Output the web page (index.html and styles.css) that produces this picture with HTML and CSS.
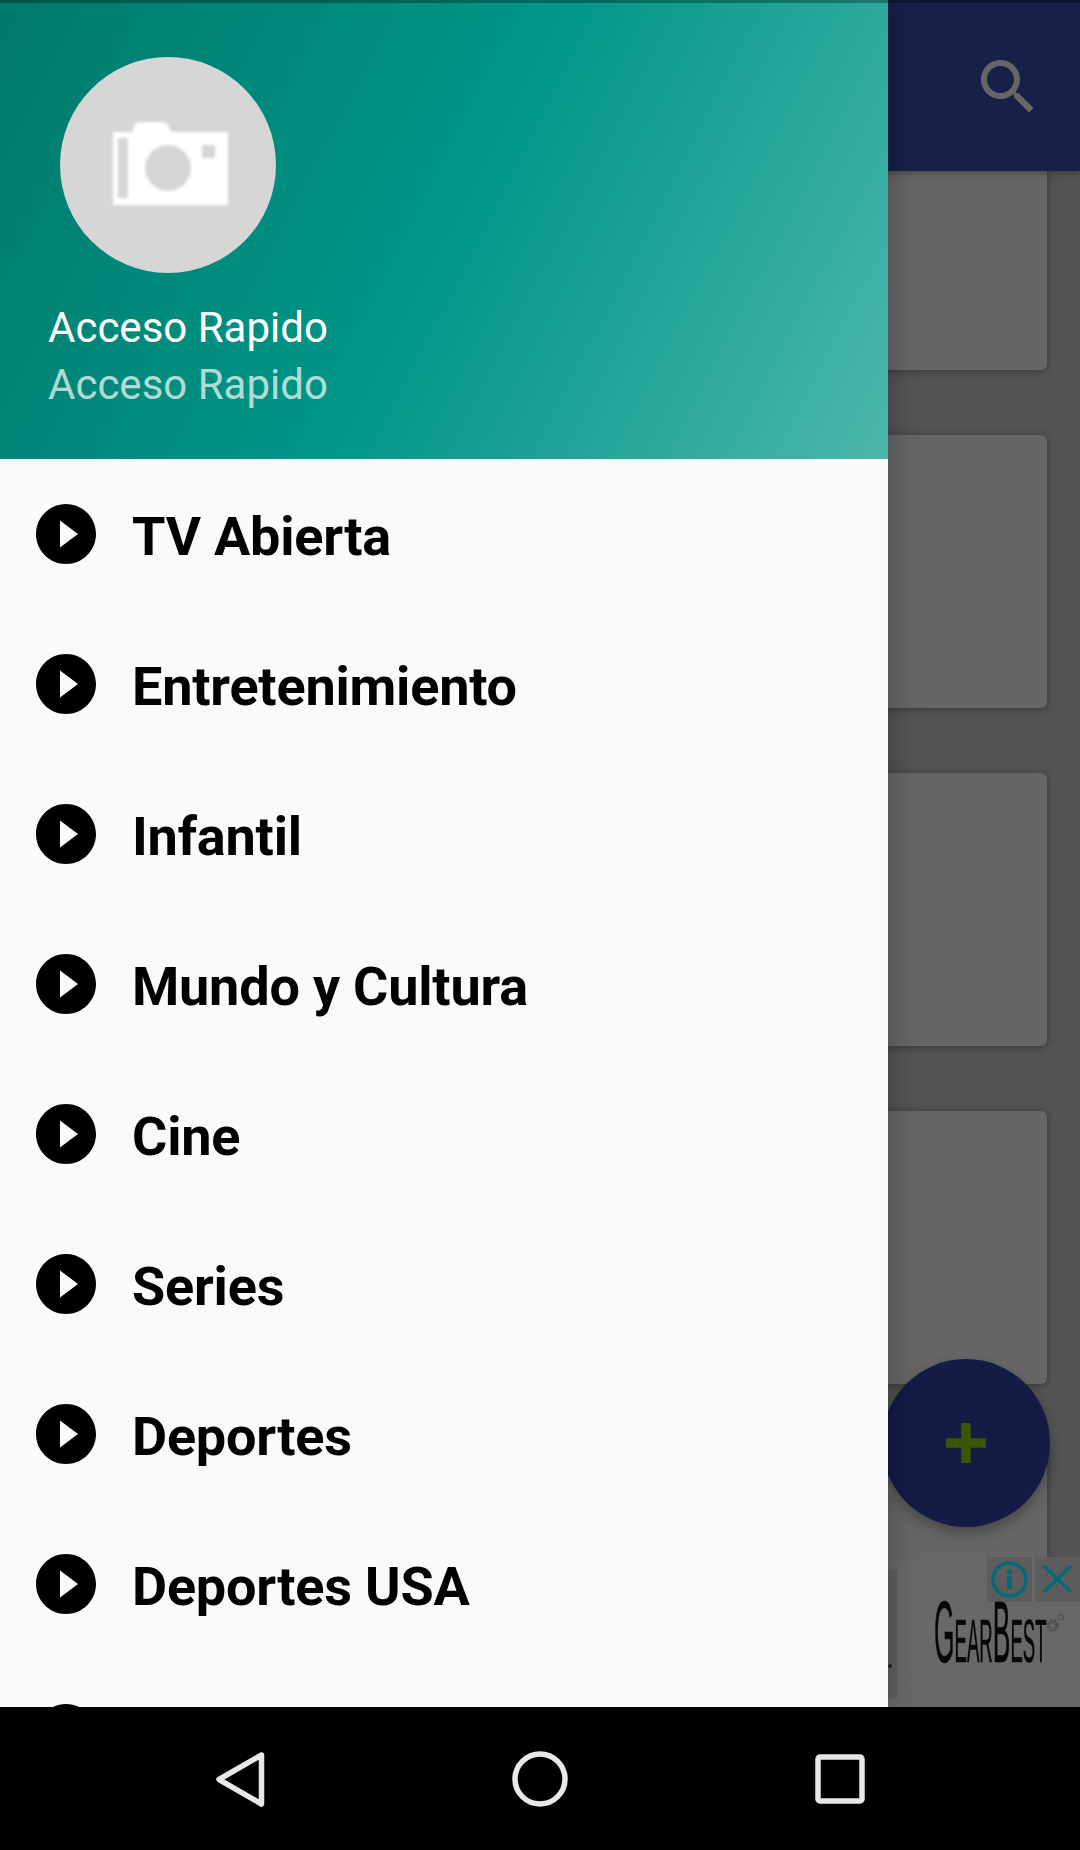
FILE: index.html
```html
<!DOCTYPE html>
<html lang="es">
<head>
<meta charset="utf-8">
<title>Acceso Rapido</title>
<link rel="stylesheet" href="styles.css">
</head>
<body>
<svg class="defs" width="0" height="0"><defs>
<symbol id="play" viewBox="0 0 24 24"><path d="M12 2C6.48 2 2 6.48 2 12s4.48 10 10 10 10-4.48 10-10S17.52 2 12 2zm-2 14.5v-9l6 4.5-6 4.5z"/></symbol>
<filter id="soft"><feGaussianBlur stdDeviation="1.700"/></filter>
</defs></svg>
<div class="phone">
  <div class="stage">
    <div class="app">
      <header class="appbar">
        <svg class="search" viewBox="0 0 24 24"><path d="M15.5 14h-.79l-.28-.27C15.41 12.59 16 11.11 16 9.5 16 5.91 13.09 3 9.5 3S3 5.91 3 9.5 5.91 16 9.5 16c1.61 0 3.09-.59 4.23-1.57l.27.28v.79l5 4.99L20.49 19l-4.99-5zm-6 0C7.01 14 5 11.99 5 9.5S7.01 5 9.5 5 14 7.01 14 9.5 11.99 14 9.5 14z"/></svg>
      </header>
      <div class="cards">
        <div class="card"></div>
        <div class="card"></div>
        <div class="card"></div>
        <div class="card"></div>
        <div class="card"></div>
      </div>
      <div class="ad">
        <div class="ad-side"></div>
        <span class="ad-dot"></span>
        <div class="ad-controls">
          <span class="ad-btn"><svg viewBox="0 0 45 45"><circle cx="22.500" cy="22.500" r="16.500" class="ad-line"/><circle cx="22.500" cy="14.500" r="2.600" class="ad-fill"/><rect x="20" y="19" width="5" height="13" class="ad-fill"/></svg></span>
          <span class="ad-btn"><svg viewBox="0 0 45 45"><path d="M9 9l27 26M36 9L9 35" class="ad-line"/></svg></span>
        </div>
        <span class="brand">GearBest</span>
        <svg class="gears" viewBox="0 0 20 20"><circle cx="7" cy="13" r="4.500" class="gear-big"/><circle cx="15.500" cy="4.500" r="2.800" class="gear-small"/></svg>
      </div>
      <button class="fab"><svg viewBox="0 0 40 40"><path d="M20 0v40M0 20h40"/></svg></button>
    </div>
    <aside class="drawer">
      <div class="drawer-head">
        <div class="avatar">
          <svg viewBox="0 0 216 216"><g filter="url(#soft)">
            <path fill-rule="evenodd" fill="#fff" d="M53 75h19l3-8q2-2 6-2h20q4 0 6 2l5 8h56v73H53zM58 81v60h10V81zM142 88v13h13V88z"/>
            <circle cx="108" cy="111" r="23" fill="#d6d6d6"/>
          </g></svg>
        </div>
        <div class="head-title">Acceso Rapido</div>
        <div class="head-sub">Acceso Rapido</div>
      </div>
      <ul class="menu">
        <li class="item"><svg class="play"><use href="#play"/></svg><span class="label">TV Abierta</span></li>
        <li class="item"><svg class="play"><use href="#play"/></svg><span class="label">Entretenimiento</span></li>
        <li class="item"><svg class="play"><use href="#play"/></svg><span class="label">Infantil</span></li>
        <li class="item"><svg class="play"><use href="#play"/></svg><span class="label">Mundo y Cultura</span></li>
        <li class="item"><svg class="play"><use href="#play"/></svg><span class="label">Cine</span></li>
        <li class="item"><svg class="play"><use href="#play"/></svg><span class="label">Series</span></li>
        <li class="item"><svg class="play"><use href="#play"/></svg><span class="label">Deportes</span></li>
        <li class="item"><svg class="play"><use href="#play"/></svg><span class="label">Deportes USA</span></li>
        <li class="item"><svg class="play"><use href="#play"/></svg></li>
      </ul>
    </aside>
    <div class="status"></div>
  </div>
  <nav class="navbar">
    <svg class="nav-icon" viewBox="0 0 72 72"><path d="M57.500 12L15 36.500 57.500 61z"/></svg>
    <svg class="nav-icon" viewBox="0 0 72 72"><circle cx="36" cy="36" r="25"/></svg>
    <svg class="nav-icon" viewBox="0 0 72 72"><rect x="14" y="14" width="44" height="44" rx="2"/></svg>
  </nav>
</div>
</body>
</html>
```
FILE: styles.css
```css
* { box-sizing: border-box; }
html, body { margin: 0; padding: 0; }
body { width: 1080px; height: 1850px; overflow: hidden; font-family: Roboto, "Liberation Sans", sans-serif; background: #000; }
.defs { position: absolute; }
.phone { width: 1080px; height: 1850px; display: flex; flex-direction: column; }
.stage { position: relative; height: 1707px; overflow: hidden; background: #545454; }
.app { height: 100%; display: flex; flex-direction: column; }

.appbar { position: relative; z-index: 2; flex: none; height: 171px; padding-right: 36px; display: flex; justify-content: flex-end; align-items: center; background: #182048; box-shadow: 0 2px 8px rgba(0,0,0,.3); }
.search { width: 72px; height: 72px; margin-top: 3px; fill: #666; }

.cards { margin: -74px 33px 0 20px; display: flex; flex-direction: column; gap: 65px; }
.card { flex: none; height: 273px; border-radius: 6px; background: #666; box-shadow: 0 1px 8px rgba(0,0,0,.36); }

.ad { position: absolute; left: 0; right: 0; bottom: 0; height: 150px; background: #686868; }
.ad-side { position: absolute; left: 888px; top: 13px; width: 9px; height: 128px; background: #606060; }
.ad-dot { position: absolute; left: 888px; top: 107px; width: 4px; height: 4px; border-radius: 50%; background: #222; }
.ad-controls { position: absolute; top: 0; right: 0; display: flex; gap: 3px; }
.ad-btn { width: 45px; height: 45px; background: #5c5c5c; }
.ad-btn svg { display: block; width: 45px; height: 45px; }
.ad-line { fill: none; stroke: #046a7a; stroke-width: 3.500; }
.ad-fill { fill: #046a7a; }
.brand { position: absolute; left: 934px; top: 31px; font: 400 88px/88px "Liberation Sans", sans-serif; font-variant: small-caps; -webkit-text-stroke: .6px #080808; color: #080808; transform: scaleX(.3); transform-origin: 0 0; white-space: nowrap; }
.gears { position: absolute; left: 1046px; top: 56px; width: 19px; height: 19px; fill: none; }
.gear-big { stroke: #4d4d4d; stroke-width: 4; stroke-dasharray: 2.400 1.200; }
.gear-small { stroke: #575757; stroke-width: 1.800; }

.fab { position: absolute; left: 882px; top: 1359px; width: 168px; height: 168px; padding: 0; border: 0; border-radius: 50%; background: #141b45; box-shadow: 0 6px 14px rgba(0,0,0,.3); display: flex; align-items: center; justify-content: center; }
.fab svg { width: 40px; height: 40px; stroke: #3b5600; stroke-width: 9.500; fill: none; }

.drawer { position: absolute; left: 0; top: 0; bottom: 0; width: 888px; z-index: 3; background: #fafafa; box-shadow: 0 0 30px rgba(0,0,0,.3); overflow: hidden; }
.drawer-head { height: 459px; padding: 57px 0 0 48px; color: #fff; background: linear-gradient(117.200deg, #00796b 0%, #009688 50%, #4db6ac 100%); }
.avatar { width: 216px; height: 216px; margin: 0 0 26px 12px; border-radius: 50%; background: #d6d6d6; }
.avatar svg { display: block; width: 216px; height: 216px; }
.head-title, .head-sub { font-size: 42px; line-height: 57px; }
.head-sub { color: rgba(255,255,255,.7); }

.menu { list-style: none; margin: 0; padding: 0; }
.item { height: 150px; padding-left: 30px; display: flex; align-items: center; gap: 30px; font-size: 54px; font-weight: 700; color: #000; }
.label { padding-top: 4px; letter-spacing: -.2px; }
.play { flex: none; width: 72px; height: 72px; fill: #000; }

.status { position: absolute; left: 0; right: 0; top: 0; height: 3px; z-index: 4; background: rgba(0,0,0,.3); }

.navbar { flex: 1; display: flex; align-items: center; justify-content: center; gap: 228px; background: #000; }
.nav-icon { width: 72px; height: 72px; fill: none; stroke: #e8e8e8; stroke-width: 5.500; stroke-linejoin: round; }
```
